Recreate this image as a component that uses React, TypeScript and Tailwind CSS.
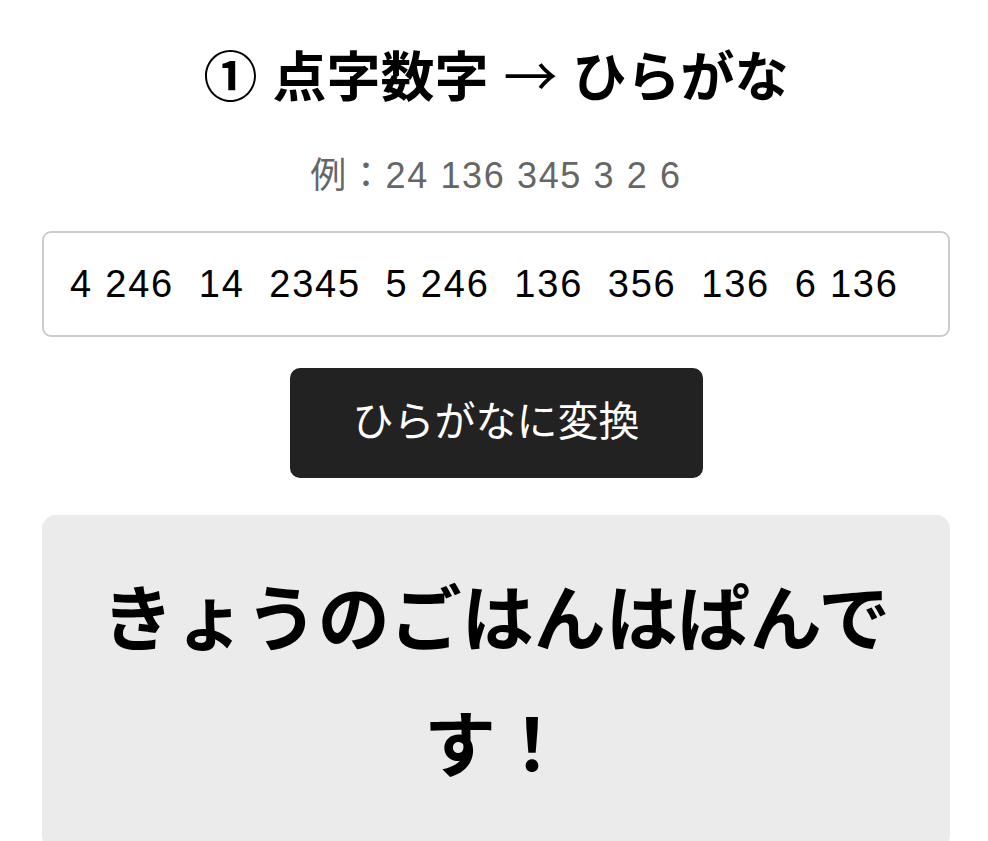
import { useState } from 'react';

const font = { fontFamily: '"Liberation Sans", "Noto Sans CJK JP", sans-serif' };

export default function App() {
  const [value, setValue] = useState('4 246  14  2345  5 246  136  356  136  6 136');
  const [result] = useState('きょうのごはんはぱんです！');

  return (
    <div className="min-h-screen bg-white pl-[42px] pr-[38px] pt-[38px]" style={font}>
      <h1 className="h-[81px] text-center text-[54px] font-bold leading-[81px] text-black">
        ① 点字数字{' '}
        <span className="font-normal leading-none" style={{ fontFamily: '"Noto Sans CJK JP", sans-serif' }}>
          →
        </span>{' '}
        ひらがな
      </h1>
      <p className="mt-[31px] text-center text-[36px] leading-[51px] tracking-[0.045em] text-[#666666]">
        例：24 136 345 3 2 6
      </p>

      <input
        type="text"
        value={value}
        onChange={(e) => setValue(e.target.value)}
        className="mt-[30px] block h-[106px] w-full rounded-[9px] border-2 border-[#cccccc] bg-white px-[26px] text-[38px] tracking-[0.047em] text-black focus:outline-none"
        style={font}
      />

      <div className="mt-[31px] flex justify-center">
        <button
          className="h-[110px] w-[413px] rounded-[10px] bg-[#222222] text-[41px] text-white"
          style={font}
        >
          ひらがなに変換
        </button>
      </div>

      <div className="mt-[37px] rounded-[14px] bg-[#ebebeb] px-[40px] pb-[40px] pt-[42px]">
        <p className="text-center text-[72px] font-bold leading-[126px] text-black">
          {result}
        </p>
      </div>
    </div>
  );
}
